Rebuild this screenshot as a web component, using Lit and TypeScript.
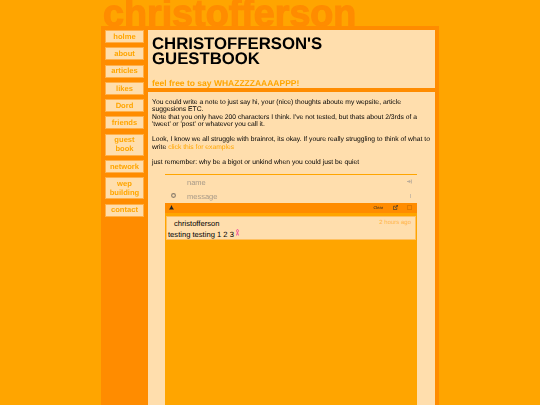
import { LitElement, html, css } from "lit";
import { customElement } from "lit/decorators.js";

const NAV = ["holme", "about", "articles", "likes", "Dord", "friends", "guest book", "network", "wep building", "contact"];

@customElement("app-root")
export class AppRoot extends LitElement {
  static styles = css`
    :host { display: block; height: 405px; overflow: hidden; background: #ffa500; font-family: "Liberation Sans", Arial, sans-serif; color: #000; text-rendering: geometricPrecision; }
    .page { width: 338px; margin-left: 101px; filter: blur(0.35px); }
    .logo { height: 26px; overflow: hidden; display: flex; align-items: flex-end; }
    .logo span { font-size: 37.7px; font-weight: 700; line-height: 26px; color: #ff8c00; margin-left: 2px; white-space: nowrap; -webkit-text-stroke: 1.2px #ff8c00; }
    .frame { background: #ff8c00; height: 420px; padding: 4px; box-sizing: border-box; display: flex; gap: 4px; }
    nav { width: 39px; display: flex; flex-direction: column; gap: 4.3px; flex: none; }
    nav a { background: #ffdead; border: 1px solid #ffb04a; box-sizing: border-box; color: #ffa500; font-size: 7.6px; font-weight: 700; text-align: center; line-height: 9px; padding: 0.7px 2px 1.3px; }
    .main { flex: 1; display: flex; flex-direction: column; gap: 4px; min-width: 0; }
    .head { background: #ffdead; height: 58px; flex: none; box-sizing: border-box; padding: 7px 4px 0; }
    h1 { margin: 0; font-size: 16.75px; line-height: 14.6px; font-weight: 700; }
    h2 { margin: 11.5px 0 0; font-size: 8.5px; line-height: 11px; font-weight: 700; color: #ffa500; }
    .body { background: #ffdead; flex: 1; padding: 6.5px 4px 0; font-size: 6.76px; line-height: 7.6px; min-height: 0; }
    p { margin: 0 0 7.4px; }
    .body a { color: #ffa500; }
    .book { margin: 7.5px 0 0 13px; width: 252px; border-top: 1px solid #ffa500; }
    .field { height: 14px; display: grid; grid-template-columns: 22px 1fr 12px; align-items: center; font-size: 7.5px; color: #a89a88; }
    .label { padding-top: 1.5px; }
    .ic { display: flex; justify-content: center; }
    .ic.left { justify-content: flex-start; padding-left: 6px; }
    .ic.shift { padding-right: 4px; }
    .bar { background: #ff8c00; height: 10px; display: flex; align-items: center; font-size: 4px; color: #222; padding: 0 5px 0 4px; }
    .bar .sp { flex: 1; }
    .bar .close { margin-right: 10px; }
    .bar .sq { width: 3px; height: 3px; border: 1px solid #e07a00; margin-left: 9px; }
    .wall { background: #ffa500; height: 240px; padding: 3.5px 1px; box-sizing: border-box; }
    .msg { background: #ffdead; border: 1px solid #ffc060; height: 24px; padding: 1.6px 1px 0 1px; position: relative; font-size: 7.6px; line-height: 9.6px; box-sizing: border-box; }
    .name { padding-left: 6px; }
    .time { position: absolute; right: 4px; top: 2px; font-size: 6px; line-height: 8px; color: #ffb347; }
    .rib { vertical-align: 1px; margin-left: 2px; }
  `;

  render() {
    return html`<div class="page">
      <div class="logo"><span>christofferson</span></div>
      <div class="frame">
        <nav>${NAV.map((n) => html`<a>${n}</a>`)}</nav>
        <div class="main">
          <div class="head">
            <h1>CHRISTOFFERSON'S<br />GUESTBOOK</h1>
            <h2>feel free to say WHAZZZZAAAAPPP!</h2>
          </div>
          <div class="body">
            <p>You could write a note to just say hi, your (nice) thoughts aboute my wepsite, article suggesions ETC.<br />Note that you only have 200 characters I think. I've not tested, but thats about 2/3rds of a 'tweet' or 'post' or whatever you call it.</p>
            <p>Look, I know we all struggle with brainrot, its okay. If youre really struggling to think of what to write <a>click this for examples</a></p>
            <p>just remember: why be a bigot or unkind when you could just be quiet</p>
            <div class="book">
              <div class="field">
                <span></span><span class="label">name</span>
                <span class="ic shift"><svg width="5" height="5" viewBox="0 0 5 5"><path d="M0 2.5h3M1.8 1l1.3 1.5L1.8 4M4.3.5v4" fill="none" stroke="#b5a898" stroke-width=".9"/></svg></span>
              </div>
              <div class="field">
                <span class="ic left"><svg width="5" height="5" viewBox="0 0 5 5"><circle cx="2.5" cy="2.5" r="1.9" fill="none" stroke="#8a7d6c" stroke-width="1.1"/></svg></span><span class="label">message</span>
                <span class="ic"><svg width="2" height="4" viewBox="0 0 2 4"><rect width="1" height="4" fill="#cdbca4"/></svg></span>
              </div>
              <div class="bar">
                <svg width="5" height="5" viewBox="0 0 5 5"><path d="M2.5 0L3.6 2.4L5 4.6H0L1.4 2.4Z" fill="#222"/></svg>
                <span class="sp"></span><span class="close">Clear</span>
                <svg width="5" height="5" viewBox="0 0 6 6"><path d="M.5 1.5h2.5M.5 1.5v4h4V3" fill="none" stroke="#333" stroke-width=".8"/><path d="M2.5 3.5L5.5.5M3.8.5h1.7v1.7" fill="none" stroke="#333" stroke-width=".8"/></svg>
                <span class="sq"></span>
              </div>
              <div class="wall">
                <div class="msg">
                  <div class="name">christofferson</div>
                  <span class="time">2 hours ago</span>
                  <div>testing testing 1 2 3<svg class="rib" width="3" height="7" viewBox="0 0 3 7"><path d="M1.5 .5C.3 .5.3 2.5 1.5 3.8C2.7 2.5 2.7 .5 1.5 .5ZM1.5 3.8L.4 6.5M1.5 3.8L2.6 6.5" fill="none" stroke="#f0509a" stroke-width="1"/></svg></div>
                </div>
              </div>
            </div>
          </div>
        </div>
      </div>
    </div>`;
  }
}
